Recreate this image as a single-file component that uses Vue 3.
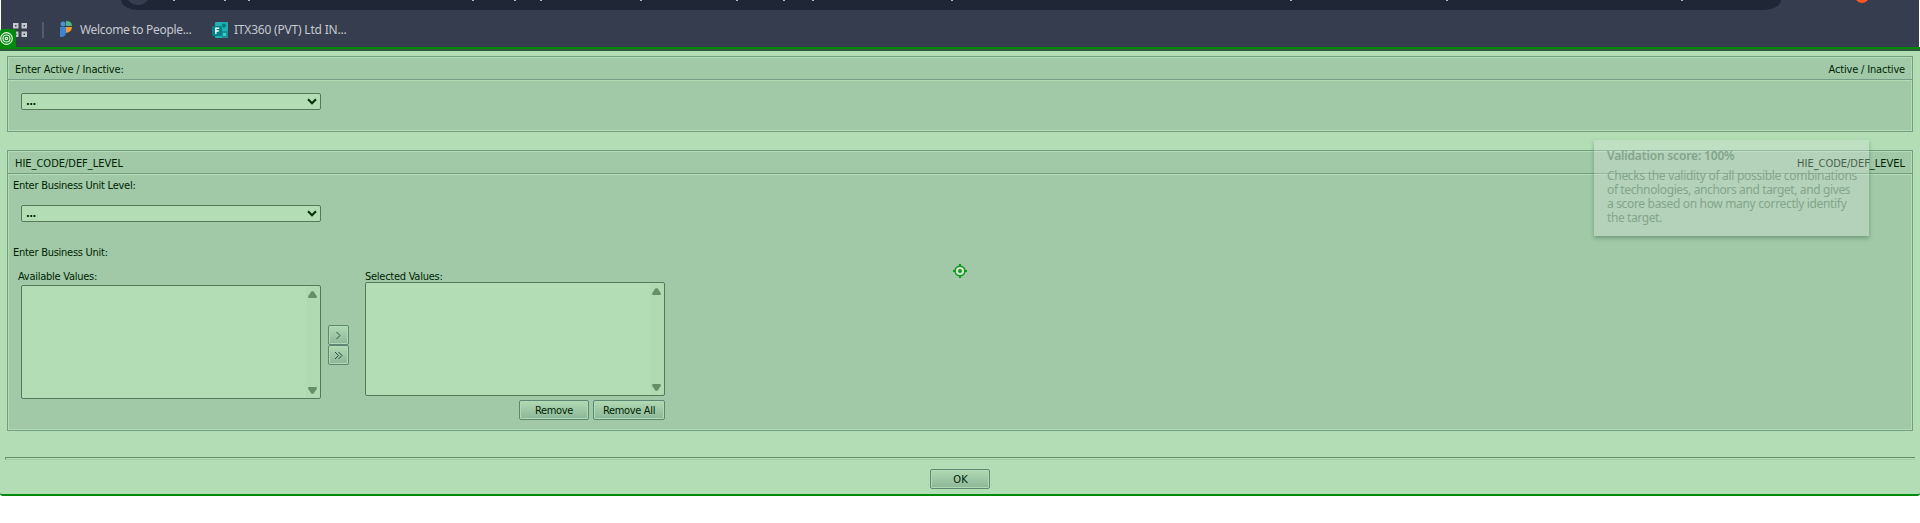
<script setup>
const marks = [173, 224, 248, 472, 514, 540, 640, 736, 783, 812, 951, 1290, 1446, 1681]
</script>

<template>
  <div class="page">
    <header class="browser">
      <div class="address"><span class="info"></span></div>
      <i v-for="m in marks" :key="m" class="mark" :style="{ left: m + 'px' }"></i>
      <span class="avatar"></span>
      <nav class="bookmarks">
        <svg class="apps" width="14" height="14" viewBox="0 0 14 14" fill="none" stroke="#c5c8cf" stroke-width="2">
          <path d="M1 1h3.5v3.5H1zM9.5 1H13v3.5H9.5zM1 9.5h3.5V13H1zM9.5 9.5H13V13H9.5z" />
        </svg>
        <span class="sep"></span>
        <svg class="people" width="13" height="17" viewBox="0 0 13 17">
          <circle cx="3" cy="3" r="2.5" fill="#4a8fd8" />
          <path d="M0 6h6v5q0 4-3.5 5H0z" fill="#3d84cf" />
          <path d="M6 0q6 0 6 5H6z" fill="#4fb783" />
          <path d="M6 6h6q0 5-6 6z" fill="#f59a32" />
        </svg>
        <span class="bm first">Welcome to People...</span>
        <svg class="forms" width="16" height="16" viewBox="0 0 16 16">
          <rect x="3" y="0" width="13" height="16" rx="1" fill="#21b0b1" />
          <path d="M10 9h6v7h-6z" fill="#1a9295" />
          <circle cx="12" cy="3.5" r="2" fill="#08777c" />
          <path d="M11 11h3v3h-3z" fill="#41c9c5" />
          <rect x="0" y="4" width="10" height="10" rx="1" fill="#038387" />
          <path d="M3.8 12V6.2h3.4M3.8 9h3" fill="none" stroke="#fff" stroke-width="1.4" />
        </svg>
        <span class="bm second">ITX360 (PVT) Ltd IN...</span>
      </nav>
    </header>

    <main class="content">
      <section class="panel status">
        <div class="head"><span class="t1">Enter Active / Inactive:</span><span class="t2">Active / Inactive</span></div>
        <div class="select"><span>...</span>
          <svg width="10" height="7" viewBox="0 0 10 7"><path d="M1 1.2l4 4 4-4" fill="none" stroke="#06330d" stroke-width="2.2" /></svg>
        </div>
      </section>

      <section class="panel units">
        <div class="head"><span class="t3">HIE_CODE/DEF_LEVEL</span><span class="t3">HIE_CODE/DEF_LEVEL</span></div>
        <p class="label level">Enter Business Unit Level:</p>
        <div class="select"><span>...</span>
          <svg width="10" height="7" viewBox="0 0 10 7"><path d="M1 1.2l4 4 4-4" fill="none" stroke="#06330d" stroke-width="2.2" /></svg>
        </div>
        <p class="label unit">Enter Business Unit:</p>
        <div class="picker">
          <div class="available">
            <p class="label avail">Available Values:</p>
            <div class="list">
              <svg width="9" height="7" viewBox="0 0 9 7"><path d="M3.5.3h2L9 5.5 8.5 7h-8L0 5.5z" fill="#648f68" /></svg>
              <svg width="9" height="7" viewBox="0 0 9 7"><path d="M3.5 6.7h2L9 1.5 8.5 0h-8L0 1.5z" fill="#648f68" /></svg>
            </div>
          </div>
          <div class="moves">
            <button class="btn"><svg width="7" height="9" viewBox="0 0 7 9"><path d="M1.5 1L5 4.5 1.5 8" /></svg></button>
            <button class="btn"><svg width="9" height="9" viewBox="0 0 9 9"><path d="M1 1l3.5 3.5L1 8M4.5 1L8 4.5 4.5 8" /></svg></button>
          </div>
          <div class="selected">
            <p class="label sel">Selected Values:</p>
            <div class="list">
              <svg width="9" height="7" viewBox="0 0 9 7"><path d="M3.5.3h2L9 5.5 8.5 7h-8L0 5.5z" fill="#648f68" /></svg>
              <svg width="9" height="7" viewBox="0 0 9 7"><path d="M3.5 6.7h2L9 1.5 8.5 0h-8L0 1.5z" fill="#648f68" /></svg>
            </div>
            <div class="actions">
              <button class="btn remove">Remove</button>
              <button class="btn all">Remove All</button>
            </div>
          </div>
        </div>
      </section>
      <div class="rule"></div>
      <button class="btn ok">OK</button>
    </main>

    <span class="badge">
      <svg width="13" height="13" viewBox="0 0 13 13" fill="none" stroke="#e4f7e4" stroke-width="1.2">
        <circle cx="6.5" cy="6.5" r="5.8" /><circle cx="6.5" cy="6.5" r="3.5" /><circle cx="6.5" cy="6.5" r="1.2" />
      </svg>
    </span>
    <svg class="target" width="14" height="14" viewBox="0 0 14 14">
      <path d="M7 0v14M0 7h14" stroke="#149a1c" stroke-width="2" />
      <circle cx="7" cy="7" r="4.9" fill="#d3e6d5" stroke="#149a1c" stroke-width="1.6" />
      <circle cx="7" cy="7" r="2" fill="#149a1c" />
    </svg>
    <aside class="tip">
      <strong>Validation score: 100%</strong>
      <div class="l1">Checks the validity of all possible combinations</div>
      <div class="l2">of technologies, anchors and target, and gives</div>
      <div class="l3">a score based on how many correctly identify</div>
      <div class="l4">the target.</div>
    </aside>
  </div>
</template>

<style>
body { margin: 0; background: #fff; }
</style>

<style scoped>
* { box-sizing: border-box; }
.page { position: relative; width: 1920px; height: 523px; overflow: hidden; background: #fff; font: 11px/14px "DejaVu Sans Condensed", "DejaVu Sans", sans-serif; font-stretch: condensed; color: #001f02; }
.browser { position: relative; height: 47px; margin: 0 1px; background: #353d4e; overflow: hidden; }
.address { height: 10px; margin-left: 120px; width: 1660px; background: #1f2737; border-radius: 0 0 18px 18px / 0 0 10px 10px; }
.info { position: absolute; left: 125px; top: -19px; width: 24px; height: 24px; border-radius: 50%; background: #353d4e; }
.mark { position: absolute; top: 0; width: 2px; height: 1px; margin-left: -1px; background: #b4bbc8; }
.avatar { position: absolute; left: 1854px; top: -11px; width: 14px; height: 14px; border-radius: 50%; background: #ff5722; }
.bookmarks { display: flex; align-items: center; height: 39px; padding-left: 12px; font: 12px/16px "Noto Sans", sans-serif; color: #c6c9d0; }
.sep { width: 2px; height: 16px; margin: 0 16px 0 15px; background: #525b6b; }
.bm { white-space: nowrap; padding-top: 1px; }
.first { width: 112px; margin: 0 20px 0 7px; letter-spacing: -.32px; }
.second { margin-left: 6px; letter-spacing: -.2px; }
.content { height: 449px; padding: 7px 7px 0; background: #b3deb5; border-top: 2px solid #008a0b; border-bottom: 2px solid #008a0b; border-radius: 0 0 3px 3px; box-shadow: inset 0 2px #2f5a3b; }
.panel { border: 1px solid #739d84; background: #a1c9a8; box-shadow: inset 0 0 0 1px #b3deb5; }
.status { height: 76px; margin-bottom: 18px; }
.units { height: 281px; }
.head { display: flex; align-items: center; justify-content: space-between; height: 23px; padding: 3px 7px 0; border-bottom: 1px solid #739d84; box-shadow: 0 1px #b3deb5; white-space: nowrap; }
.t1 { letter-spacing: -.16px; }
.t2 { letter-spacing: -.18px; }
.t3 { letter-spacing: -.02px; }
.label { margin: 0; white-space: nowrap; letter-spacing: -.26px; }
.select { display: flex; align-items: center; justify-content: space-between; width: 300px; height: 17px; margin: 12px 0 0 13px; padding: 0 3px 0 4px; border: 1px solid #517c57; border-radius: 2px; background: #b3deb5; }
.select span { padding-top: 1px; font-weight: bold; letter-spacing: -.5px; }
.status .select { margin-top: 13px; }
.level { margin: 5px 0 0 5px; }
.unit { margin: 24px 0 0 5px; }
.picker { display: flex; height: 160px; margin-top: 9px; }
.available { margin-left: 13px; padding-top: 1px; }
.avail { height: 15px; margin-left: -3px; }
.sel { height: 13px; padding-top: 1px; }
.list { display: flex; flex-direction: column; justify-content: space-between; align-items: flex-end; width: 300px; height: 114px; padding: 5px 3px 4px; border: 1px solid #517c57; border-radius: 2px; background: linear-gradient(90deg, #b3deb5 284px, #b0dab2 284px); }
.moves { display: flex; flex-direction: column; width: 21px; margin: 56px 16px 0 7px; }
.btn { display: flex; align-items: center; justify-content: center; height: 20px; padding: 0; border: 1px solid #5b8773; border-radius: 2px; color: #001f02; font: inherit; white-space: nowrap; background: linear-gradient(#b0dab2, #8db69a); box-shadow: inset 0 0 0 1px #b0dab2; }
.moves .btn { width: 21px; }
.btn svg { fill: none; stroke: #234f3b; stroke-width: 1; }
.actions { display: flex; justify-content: flex-end; gap: 4px; margin-top: 4px; }
.actions .btn { letter-spacing: -.33px; padding-top: 2px; }
.remove { width: 70px; }
.all { width: 72px; }
.rule { height: 3px; margin: 26px -2px 9px; border-top: 1px solid #65926b; border-left: 1px solid #65926b; border-bottom: 1px solid #a5cda7; }
.ok { width: 60px; margin: 0 auto; padding: 2px 0 0 1px; }
.badge { position: absolute; left: 0; top: 29px; display: flex; align-items: center; width: 16px; height: 20px; padding-bottom: 1px; border-radius: 3px 3px 0 0; background: #008a0b; }
.target { position: absolute; left: 953px; top: 264px; }
.tip { position: absolute; left: 1594px; top: 140px; width: 275px; height: 96px; padding: 9px 13px; background: rgba(220, 230, 224, .32); box-shadow: 0 2px 4px rgba(40, 80, 50, .4); color: #83a58b; font: 12px/14px "Noto Sans", sans-serif; white-space: nowrap; }
.tip strong { display: block; height: 20px; font-weight: 600; letter-spacing: -.16px; }
.l1 { letter-spacing: -.3px; }
.l2 { letter-spacing: -.38px; }
.l3 { letter-spacing: -.33px; }
.l4 { letter-spacing: -.4px; }
</style>
